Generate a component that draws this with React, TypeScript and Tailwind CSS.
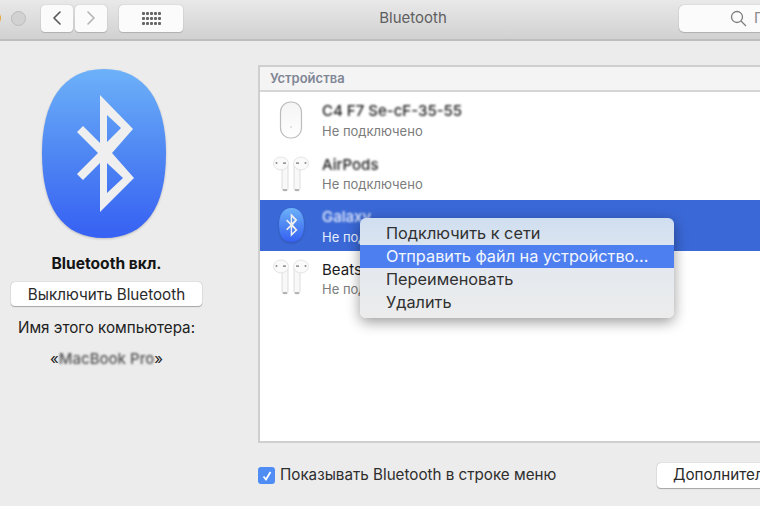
import { ChevronLeft, ChevronRight } from "lucide-react";

const font = { fontFamily: '"Inter", "Liberation Sans", sans-serif' };

function BluetoothBadge({ size, id }: { size: number; id: string }) {
  return (
    <svg width={size} height={size * 1.363} viewBox="0 0 124 169" className="block drop-shadow-[0_1px_1px_rgba(0,0,0,0.2)]">
      <defs>
        <linearGradient id={id} x1="0" y1="0" x2="0" y2="1">
          <stop offset="0" stopColor="#6db1f9" />
          <stop offset="0.5" stopColor="#4f87f3" />
          <stop offset="1" stopColor="#3660f3" />
        </linearGradient>
      </defs>
      <path
        d="M62 0C104 0 124 34 124 84C124 138 104 169 62 169C20 169 0 138 0 84C0 34 20 0 62 0Z"
        fill={`url(#${id})`}
      />
      <path
        d="M58 26L91 60L70 84L92 109L58 143V94L41 111L35 105L56 84L35 63L41 57L58 74ZM65 46V73L79 59ZM65 94V124L81 109Z"
        fill="#efefef"
        fillRule="evenodd"
      />
    </svg>
  );
}

function MouseIcon() {
  return (
    <svg width="24" height="38" viewBox="0 0 24 38">
      <defs>
        <linearGradient id="mouseFill" x1="0" y1="0" x2="0" y2="1">
          <stop offset="0" stopColor="#f4f4f4" />
          <stop offset="1" stopColor="#ffffff" />
        </linearGradient>
      </defs>
      <rect x="1.5" y="1" width="21" height="36" rx="10" fill="url(#mouseFill)" stroke="#bdbdbd" strokeWidth="1.2" />
      <circle cx="12" cy="26" r="1" fill="#dddddd" />
    </svg>
  );
}

function AirPodsIcon() {
  return (
    <svg width="36" height="36" viewBox="0 0 36 36">
      <rect x="9" y="8" width="6" height="27" rx="2.5" fill="#f8f8f8" stroke="#d6d6d6" strokeWidth="0.8" />
      <ellipse cx="8" cy="7.5" rx="7.5" ry="6.5" fill="#fafafa" stroke="#dedede" strokeWidth="0.8" />
      <circle cx="3.5" cy="7" r="1" fill="#8a8a8a" />
      <rect x="10" y="6.5" width="3" height="1.2" fill="#6f6f6f" />
      <rect x="10" y="33" width="4" height="2" fill="#b4b4b4" />
      <rect x="21" y="8" width="6" height="27" rx="2.5" fill="#f8f8f8" stroke="#d6d6d6" strokeWidth="0.8" />
      <ellipse cx="28" cy="7.5" rx="7.5" ry="6.5" fill="#fafafa" stroke="#dedede" strokeWidth="0.8" />
      <circle cx="32.5" cy="7" r="1" fill="#8a8a8a" />
      <rect x="23" y="6.5" width="3" height="1.2" fill="#6f6f6f" />
      <rect x="22" y="33" width="4" height="2" fill="#b4b4b4" />
    </svg>
  );
}

function DeviceRow({
  icon,
  name,
  blurName = true,
  selected = false,
  height,
  textOffset = "",
  nameGap = "gap-[3px]",
}: {
  icon: React.ReactNode;
  name: string;
  blurName?: boolean;
  selected?: boolean;
  height: string;
  textOffset?: string;
  nameGap?: string;
}) {
  return (
    <div className={`flex items-center ${height} ${selected ? "bg-[#3a68d6]" : "bg-white"}`}>
      <div className="flex w-[62px] shrink-0 justify-center">{icon}</div>
      <div className={`flex flex-col ${nameGap} ${textOffset}`}>
        <span
          className={`text-[15px] leading-[18px] whitespace-nowrap ${blurName ? "blur-[1.2px] font-medium" : ""} ${
            selected ? "text-[#e4ecfd]" : "text-[#1c1c1c]"
          }`}
        >
          {name}
        </span>
        <span className={`text-[13px] leading-[17px] whitespace-nowrap ${selected ? "text-[#e6edfc]" : "text-[#7c7c7c]"}`}>
          Не подключено
        </span>
      </div>
    </div>
  );
}

function Toolbar() {
  const navBtn =
    "flex h-[27px] items-center justify-center rounded-[4px] bg-[#fbfbfb] shadow-[0_0_1px_#9d9d9d,0_1px_1px_#b3b3b3]";
  return (
    <header className="relative flex h-[41px] items-center border-b-2 border-[#bdbdbd] bg-gradient-to-b from-[#e9e9e9] to-[#d1d1d1] pb-[3px]">
      <div className="absolute -left-[13px] top-[11px] h-[14px] w-[14px] rounded-full bg-[#e7a73a]" />
      <div className="ml-[11px] h-[15px] w-[15px] rounded-full border border-[#bcbcbc] bg-[#d2d2d2]" />
      <div className="ml-[15px] flex gap-[2px]">
        <div className={`${navBtn} w-[32px]`}>
          <ChevronLeft size={24} strokeWidth={1.6} className="text-[#555555]" />
        </div>
        <div className={`${navBtn} w-[32px]`}>
          <ChevronRight size={24} strokeWidth={1.6} className="text-[#b4b4b4]" />
        </div>
      </div>
      <div className={`${navBtn} ml-[12px] w-[64px]`}>
        <div className="grid grid-cols-[repeat(5,3px)] gap-x-[1px] gap-y-[2px]">
          {Array.from({ length: 15 }).map((_, i) => (
            <span key={i} className="h-[3px] w-[3px] rounded-[1px] bg-[#666666]" />
          ))}
        </div>
      </div>
      <div className="flex-1 pr-[36px] text-center text-[15px] text-[#5f5f5f]">Bluetooth</div>
      <div className="flex h-[27px] w-[120px] -mr-[39px] items-center rounded-[5px] bg-[#fbfbfb] pl-[51px] shadow-[0_0_1px_#9d9d9d,0_1px_1px_#b3b3b3]">
        <svg width="17" height="17" viewBox="0 0 17 17" fill="none" stroke="#7d7d7d" strokeWidth="1.3">
          <circle cx="7" cy="7" r="5.5" />
          <path d="M11 11L16 16" />
        </svg>
        <span className="ml-[7px] text-[15px] text-[#8a8a8a]">П</span>
      </div>
    </header>
  );
}

export default function App() {
  return (
    <div className="relative flex h-[506px] w-[760px] flex-col overflow-hidden bg-[#ececec]" style={font}>
      <Toolbar />
      <div className="flex min-h-0 flex-1">
        <aside className="flex w-[258px] shrink-0 flex-col pl-[11px] pr-[56px] pt-[28px]">
          <div className="ml-[31px]">
            <BluetoothBadge size={124} id="bigBadge" />
          </div>
          <div className="mt-[17px] text-center text-[15.6px] font-bold leading-[18px] whitespace-nowrap text-[#141414]">Bluetooth вкл.</div>
          <div className="mt-[9px] flex h-[24px] items-center justify-center rounded-[4px] bg-white pt-[2px] text-[15.2px] whitespace-nowrap text-[#2a2a2a] shadow-[0_0_1px_#8f8f8f,0_1px_1px_#a8a8a8]">
            Выключить Bluetooth
          </div>
          <div className="mt-[13px] text-center text-[15.2px] leading-[18px] whitespace-nowrap text-[#222222]">Имя этого компьютера:</div>
          <div className="mt-[13px] flex items-center justify-center text-[15px] leading-[18px] whitespace-nowrap text-[#222222]">
            «<span className="blur-[1.2px] font-medium text-[#555555]">MacBook Pro</span>»
          </div>
        </aside>
        <main className="flex min-w-0 flex-1 flex-col pt-[24px]">
          <section className="-mr-[2px] h-[378px] border-2 border-[#cfcfcf] border-r-0 bg-white">
            <div className="flex h-[25px] items-center border-b-2 border-[#d5d5d5] bg-[#f4f4f4] pl-[10px] text-[13px] font-semibold text-[#7f8694]">
              Устройства
            </div>
            <DeviceRow height="h-[56px]" icon={<MouseIcon />} name="C4 F7 Se-cF-35-55" textOffset="pt-[2px]" />
            <DeviceRow height="h-[52px]" icon={<AirPodsIcon />} name="AirPods" textOffset="pt-[1px]" nameGap="gap-[2px]" />
            <DeviceRow
              height="h-[51px]"
              selected
              name="Galaxy"
              icon={<BluetoothBadge size={25} id="rowBadge" />}
              textOffset="pt-[3px]"
            />
            <DeviceRow height="h-[52px]" icon={<AirPodsIcon />} name="Beats" blurName={false} textOffset="pt-[4px]" nameGap="gap-[2px]" />
          </section>
          <footer className="flex flex-1 items-center pt-[2px]">
            <span className="flex h-[17px] w-[17px] items-center justify-center rounded-[3px] bg-[#4f8df5]">
              <svg width="12" height="12" viewBox="0 0 12 12" fill="none" stroke="#ffffff" strokeWidth="1.8">
                <path d="M2.5 6.5L5 9.5L9.5 2" />
              </svg>
            </span>
            <span className="ml-[5px] text-[15.2px] whitespace-nowrap text-[#2e2e2e]">Показывать Bluetooth в строке меню</span>
            <div className="ml-auto flex h-[25px] w-[140px] -mr-[37px] shrink-0 items-center rounded-[4px] bg-white pl-[16px] text-[15.2px] whitespace-nowrap text-[#2a2a2a] shadow-[0_0_1px_#8f8f8f,0_1px_1px_#a8a8a8]">
              Дополнительно...
            </div>
          </footer>
        </main>
      </div>

      <div className="absolute left-[360px] top-[218px] flex h-[100px] w-[314px] flex-col overflow-hidden rounded-[6px] bg-gradient-to-b from-[#cfdeef] via-[#e4e9ef] to-[#ececec] pt-[4px] text-[16.3px] leading-[23px] text-[#303030] shadow-[0_4px_14px_rgba(0,0,0,0.4)]">
        <div className="pl-[26px]">Подключить к сети</div>
        <div className="bg-[#4d7ff0] pl-[26px] text-[#f3f6fe]">Отправить файл на устройство...</div>
        <div className="pl-[26px]">Переименовать</div>
        <div className="pl-[26px] leading-[22px]">Удалить</div>
      </div>
    </div>
  );
}
